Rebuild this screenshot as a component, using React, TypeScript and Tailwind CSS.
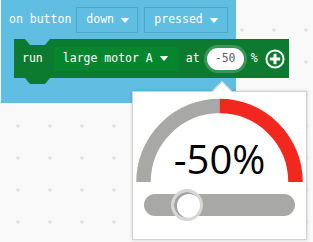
import React from "react";

const mono = { fontFamily: '"DejaVu Sans Mono", "Liberation Mono", monospace' };

function Caret() {
  return (
    <svg width="8" height="5" viewBox="0 0 8 5" className="shrink-0">
      <path d="M0.5 0.5 H7.5 L4 4.6 Z" fill="#fff" stroke="#fff" strokeWidth="0.8" strokeLinejoin="round" />
    </svg>
  );
}

function Dropdown({ label, className }: { label: string; className: string }) {
  return (
    <div className={`flex h-[26px] items-center gap-[7px] border border-[#4ea8ca] pl-[9px] text-white ${className}`}>
      <span>{label}</span>
      <Caret />
    </div>
  );
}

export default function App() {
  const cx = 86.5;
  const cy = 90;
  const r = 76;
  return (
    <div
      className="relative h-[242px] w-[313px] overflow-hidden bg-[#f9f9f9] text-[11.5px] leading-none"
      style={mono}
    >
      {/* workspace grid */}
      <svg className="absolute inset-0" width="313" height="242">
        <defs>
          <pattern id="g" x="2" y="14" width="32" height="32" patternUnits="userSpaceOnUse">
            <path d="M14 16 H18 M16 14 V18" stroke="#d9d9d9" strokeWidth="1" />
          </pattern>
        </defs>
        <rect width="313" height="242" fill="url(#g)" />
      </svg>

      {/* event block */}
      <div className="absolute left-[1px] top-0 h-[103px] w-[235px] bg-[#60bee2]">
        <div className="flex items-center pl-[8px] pt-[7px] text-white">
          <span className="mr-[5px]">on button</span>
          <Dropdown label="down" className="mr-[6px] w-[62px]" />
          <Dropdown label="pressed" className="w-[84px]" />
        </div>

        {/* motor block */}
        <div className="relative ml-[13px] mt-[6px] flex h-[39px] w-[275px] items-center bg-[#0c7b2f] pl-[8px] text-white">
          <svg className="absolute left-[11px] top-0" width="25" height="6" viewBox="0 0 25 6">
            <path d="M0 0 H25 L20 6 H5 Z" fill="#60bee2" />
          </svg>
          <svg className="absolute left-[11px] top-[39px]" width="25" height="6" viewBox="0 0 25 6">
            <path d="M0 0 H25 L20 6 H5 Z" fill="#0c7b2f" />
          </svg>
          <span className="mr-[11px]">run</span>
          <div className="mr-[7px] flex h-[24px] items-center gap-[7px] bg-[#06852f] pl-[9px] pr-[11px]">
            <span>large motor A</span>
            <Caret />
          </div>
          <span className="mr-[7px]">at</span>
          <div className="mr-[7px] flex h-[22px] w-[37px] items-center justify-center rounded-full bg-white text-[#575e75] shadow-[0_0_0_3px_#3b9557]">
            -50
          </div>
          <span className="mr-[7px]">%</span>
          <svg width="20" height="20" viewBox="0 0 20 20">
            <circle cx="10" cy="10" r="8.6" fill="none" stroke="#fff" strokeWidth="2" />
            <path d="M10 4.8 V15.2 M4.8 10 H15.2" stroke="#fff" strokeWidth="3" />
          </svg>
        </div>
      </div>

      {/* slider popup */}
      <div className="absolute left-[132px] top-[91px] flex w-[175px] flex-col border border-[#d2d2d2] bg-white pb-[23px] shadow-[0_0_3px_rgba(0,0,0,0.18)]">
        <div className="absolute left-[82px] top-[-8px] h-[14px] w-[14px] rotate-45 border-l border-t border-[#d2d2d2] bg-white" />
        <div className="relative h-[90px] w-[173px]">
          <svg className="absolute inset-0" width="173" height="90" viewBox="0 0 173 90">
            <path
              d={`M ${cx - r} ${cy} A ${r} ${r} 0 0 1 ${cx} ${cy - r}`}
              fill="none"
              stroke="#a8a9a6"
              strokeWidth="14.5"
            />
            <path
              d={`M ${cx} ${cy - r} A ${r} ${r} 0 0 1 ${cx + r} ${cy}`}
              fill="none"
              stroke="#f2281f"
              strokeWidth="14.5"
            />
          </svg>
          <div
            className="absolute left-0 right-0 top-[47px] text-center text-[40px] leading-[40px] text-black"
            style={{ fontFamily: '"Open Sans", "Noto Sans", sans-serif' }}
          >
            -50%
          </div>
        </div>
        <div className="relative mx-[11px] mt-[12px] h-[22px] rounded-full bg-[#a8a9a6]">
          <div className="absolute left-[27px] top-[-5px] h-[32px] w-[32px] rounded-full border-[3px] border-[#d6d6d6] bg-white shadow-[inset_2px_1px_0_1px_#a3a3a3]" />
        </div>
      </div>
    </div>
  );
}
